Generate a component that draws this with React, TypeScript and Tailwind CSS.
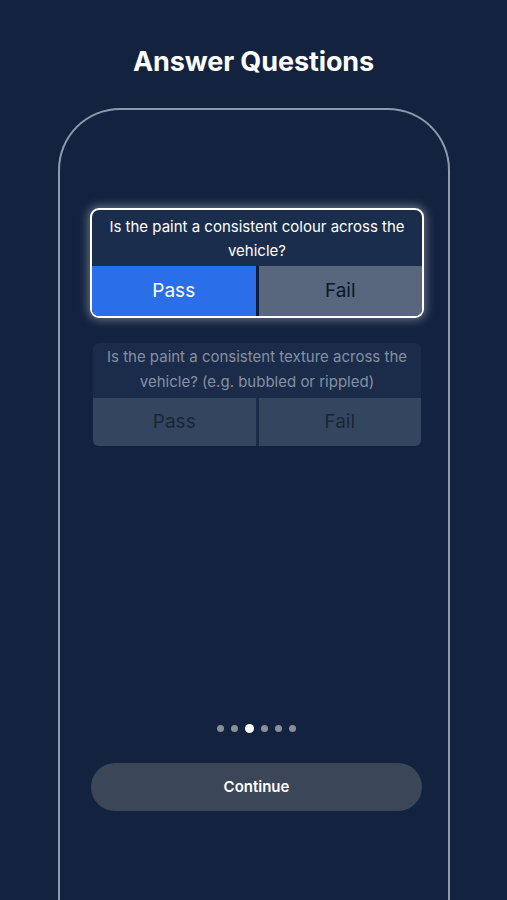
export default function App() {
  return (
    <div
      className="h-[900px] overflow-hidden bg-[#12223f] flex flex-col items-center"
      style={{ fontFamily: 'Inter, "Liberation Sans", sans-serif' }}
    >
      <h1 className="mt-[45px] text-[27px] leading-[34px] font-bold text-white tracking-[-0.1px]">
        Answer Questions
      </h1>

      <div className="mt-[29px] ml-[1px] w-[392px] h-[900px] shrink-0 rounded-t-[62px] border-2 border-b-0 border-[#8e9ab0] flex flex-col">
        <div className="mt-[98px] ml-[30px] w-[334px] rounded-[9px] border-[2.5px] border-white bg-[#1b2d4c] overflow-hidden shadow-[0_0_10px_2px_rgba(255,255,255,0.35)]">
          <p className="px-3 pt-[5px] pb-[3px] text-center text-[15px] leading-[24px] text-white">
            Is the paint a consistent colour across the vehicle?
          </p>
          <div className="flex h-[50px]">
            <button className="flex-1 bg-[#2a6ee9] text-white text-[19px]">Pass</button>
            <div className="w-[3px] bg-[#0f1d36]" />
            <button className="flex-1 bg-[#58677d] text-[#0d1626] text-[19px]">Fail</button>
          </div>
        </div>

        <div className="mt-[25px] ml-[33px] w-[328px] rounded-[6px] bg-[#1a2c4a] overflow-hidden">
          <p className="px-3 pt-[1px] pb-[4px] text-center text-[15px] leading-[25px] text-[#8690a2]">
            Is the paint a consistent texture across the vehicle? (e.g. bubbled or rippled)
          </p>
          <div className="flex h-[48px]">
            <button className="flex-1 bg-[#34465f] text-[#1a2536] text-[19px]">Pass</button>
            <div className="w-[3px] bg-[#1a2c4a]" />
            <button className="flex-1 bg-[#34465f] text-[#1a2536] text-[19px]">Fail</button>
          </div>
        </div>

        <div className="mt-[278px] flex items-center justify-center gap-[7px] ml-[4px]">
          <span className="w-[7px] h-[7px] rounded-full bg-[#8c8f97]" />
          <span className="w-[7px] h-[7px] rounded-full bg-[#8c8f97]" />
          <span className="w-[9px] h-[9px] rounded-full bg-white" />
          <span className="w-[7px] h-[7px] rounded-full bg-[#8c8f97]" />
          <span className="w-[7px] h-[7px] rounded-full bg-[#8c8f97]" />
          <span className="w-[7px] h-[7px] rounded-full bg-[#8c8f97]" />
        </div>

        <button className="mt-[30px] ml-[31px] w-[331px] h-[48px] rounded-full bg-[#3b4759] text-white text-[15px] font-semibold">
          Continue
        </button>
      </div>
    </div>
  );
}
